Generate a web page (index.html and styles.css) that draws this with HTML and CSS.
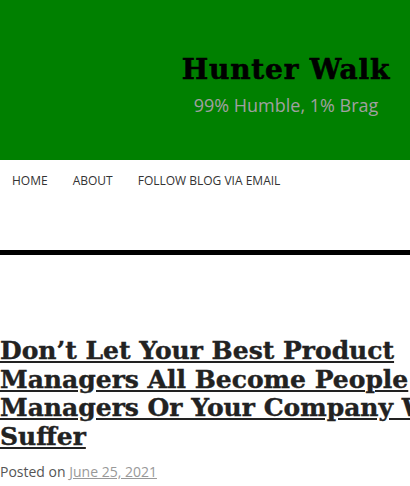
FILE: index.html
```html
<!DOCTYPE html>
<html>
<head>
<meta charset="utf-8">
<link rel="stylesheet" href="styles.css">
</head>
<body>
<header class="site-header">
  <div class="branding">
    <h1 class="site-title">Hunter Walk</h1>
    <p class="site-desc">99% Humble, 1% Brag</p>
  </div>
</header>
<nav class="main-nav">
  <ul class="menu">
    <li><a href="#">Home</a></li>
    <li><a href="#">About</a></li>
    <li><a href="#">Follow Blog via Email</a></li>
  </ul>
</nav>
<div class="divider"></div>
<main class="content">
  <article class="post">
    <h2 class="entry-title"><a href="#">Don’t Let Your Best Product Managers All Become People Managers Or Your Company Will Suffer</a></h2>
    <div class="entry-meta">Posted on <a href="#">June 25, 2021</a></div>
  </article>
</main>
</body>
</html>
```
FILE: styles.css
```css
html, body {
  margin: 0;
  padding: 0;
  background: #fff;
}
body {
  font-family: "Open Sans", "Liberation Sans", sans-serif;
  color: #333;
  overflow: hidden;
}
.site-header {
  background: #008000;
  height: 160px;
  box-sizing: border-box;
  padding-top: 50px;
}
.branding {
  margin-left: 162px;
  text-align: center;
}
.site-title {
  margin: 0;
  font-family: "DejaVu Serif", serif;
  font-weight: bold;
  font-size: 28px;
  line-height: 40px;
  color: #000;
  letter-spacing: 0.8px;
  -webkit-text-stroke: 0.6px #000;
}
.site-desc {
  margin: 0;
  font-family: "Open Sans", sans-serif;
  font-weight: 500;
  font-size: 18px;
  line-height: 30px;
  color: #a0a0a0;
}
.main-nav {
  height: 90px;
}
.menu {
  list-style: none;
  margin: 0;
  padding: 8px 0 0 12px;
  display: flex;
  gap: 25px;
}
.menu a {
  text-transform: uppercase;
  text-decoration: none;
  color: #333;
  font-size: 12px;
  line-height: 20px;
}
.divider {
  height: 5px;
  background: #000;
}
.content {
  padding-top: 82px;
}
.entry-title {
  margin: 0;
  width: 470px;
  font-family: "DejaVu Serif", serif;
  font-weight: bold;
  font-size: 25px;
  line-height: 28.5px;
  -webkit-text-stroke: 0.4px #222;
}
.entry-title a {
  color: #222;
  text-decoration: underline;
}
.entry-meta {
  margin-top: 10px;
  font-size: 14px;
  line-height: 22px;
  color: #555;
}
.entry-meta a {
  color: #999;
}
```
